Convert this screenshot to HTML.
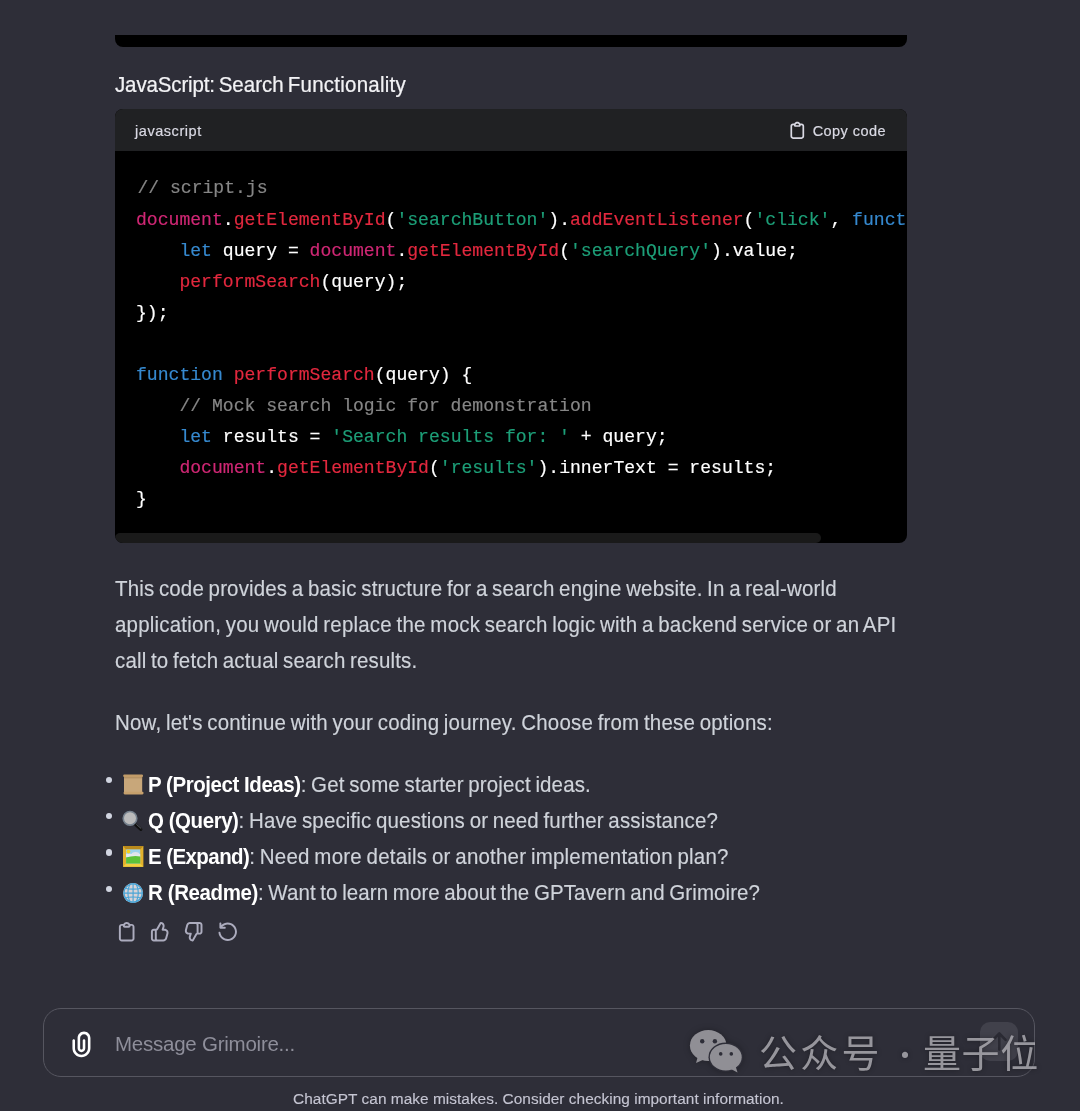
<!DOCTYPE html>
<html lang="en">
<head>
<meta charset="utf-8">
<title>Grimoire</title>
<style>
*{box-sizing:border-box;margin:0;padding:0}
html,body{width:1080px;height:1111px;overflow:hidden;background:#2e2e38}
body{position:relative;will-change:transform;font-family:"Liberation Sans",sans-serif;color:#d1d5db}
.abs{position:absolute;white-space:nowrap}
svg{position:absolute;display:block;overflow:visible}
.prev{left:115px;top:35px;width:792px;height:12px;background:#000;border-radius:0 0 8px 8px}
.h{left:115px;top:71px;font-size:20.5px;line-height:28px;color:#f2f2f5;-webkit-text-stroke:.22px #f2f2f5;transform:scaleY(1.06);transform-origin:0 21.1px}
.cb{left:115px;top:109px;width:792px;height:434px;background:#000;border-radius:8px;overflow:hidden}
.cbh{left:0;top:0;width:792px;height:42px;background:#202123}
.lang{left:20px;top:13px;font-size:14.5px;line-height:18px;color:#d9d9e3;letter-spacing:.55px;-webkit-text-stroke:.2px}
.copy{right:21px;top:13px;font-size:14.5px;line-height:18px;color:#d9d9e3;letter-spacing:.45px;-webkit-text-stroke:.2px}
.cl{left:21px;font-family:"Liberation Mono",monospace;font-size:18.08px;line-height:31px;color:#fff;white-space:pre;-webkit-text-stroke:.18px}
.c{color:#868686}.m{color:#cf2774}.r{color:#e2283e}.g{color:#1d9f78}.b{color:#3689cf}
.sb{left:0;top:424px;width:706px;height:10px;background:#1a1a1a;border-radius:5px}
.p{left:115px;font-size:20.5px;line-height:36px;color:#cfd3da;-webkit-text-stroke:.16px;word-spacing:-1.2px;transform:scaleY(1.045);transform-origin:0 25.1px}
.p b{color:#fff;font-weight:700;letter-spacing:-.45px;-webkit-text-stroke:0;word-spacing:0}
.dot{width:6.4px;height:6.4px;border-radius:50%;background:#d1d5e0}
.inp{left:43px;top:1008px;width:992px;height:69px;border:1px solid #565660;border-radius:18px;background:#2e2e38}
.ph{left:115px;top:1030px;font-size:20.5px;line-height:28px;color:#8e8e9a;letter-spacing:-.24px}
.foot{left:0;top:1090px;width:1077px;text-align:center;font-size:15.4px;line-height:18px;color:#c5c5d2;letter-spacing:.04px;-webkit-text-stroke:.12px}
.send{left:979.5px;top:1022px;width:38.5px;height:38.5px;border-radius:10px;background:#41414b}
.wm{font-family:"Liberation Sans","Noto Sans CJK SC",sans-serif;font-size:38px;line-height:54px;color:rgba(176,175,180,.82);text-shadow:0 0 5px rgba(0,0,0,.35)}
</style>
</head>
<body>
<div class="abs prev"></div>
<div class="abs h" style="letter-spacing:-.136px">JavaScript:</div><div class="abs h" style="left:218.7px">Search</div><div class="abs h" style="left:287.8px;letter-spacing:.23px">Functionality</div>

<div class="abs cb">
  <div class="abs cbh">
    <div class="abs lang">javascript</div>
    <svg style="left:671.75px;top:10.5px" width="20.6" height="20.6" viewBox="0 0 24 24" fill="#d9d9e3"><path fill-rule="evenodd" clip-rule="evenodd" d="M12 4C10.8954 4 10 4.89543 10 6H14C14 4.89543 13.1046 4 12 4ZM8.53513 4C9.22675 2.8044 10.5194 2 12 2C13.4806 2 14.7733 2.8044 15.4649 4H17C18.6569 4 20 5.34315 20 7V19C20 20.6569 18.6569 22 17 22H7C5.34315 22 4 20.6569 4 19V7C4 5.34315 5.34315 4 7 4H8.53513ZM8 6H7C6.44772 6 6 6.44772 6 7V19C6 19.5523 6.44772 20 7 20H17C17.5523 20 18 19.5523 18 19V7C18 6.44772 17.5523 6 17 6H16C16 7.10457 15.1046 8 14 8H10C8.89543 8 8 7.10457 8 6Z"/></svg>
    <div class="abs copy">Copy code</div>
  </div>
  <div class="abs cl" style="top:65px;transform:translate(1.4px,-.7px)"><span class="c">// script.js</span></div>
  <div class="abs cl" style="top:96px"><span class="m">document</span>.<span class="r">getElementById</span>(<span class="g">'searchButton'</span>).<span class="r">addEventListener</span>(<span class="g">'click'</span>, <span class="b">function</span>() {</div>
  <div class="abs cl" style="top:127px">    <span class="b">let</span> query = <span class="m">document</span>.<span class="r">getElementById</span>(<span class="g">'searchQuery'</span>).value;</div>
  <div class="abs cl" style="top:158px">    <span class="r">performSearch</span>(query);</div>
  <div class="abs cl" style="top:189px">});</div>
  <div class="abs cl" style="top:251px"><span class="b">function</span> <span class="r">performSearch</span>(query) {</div>
  <div class="abs cl" style="top:282px">    <span class="c">// Mock search logic for demonstration</span></div>
  <div class="abs cl" style="top:313px">    <span class="b">let</span> results = <span class="g">'Search results for: '</span> + query;</div>
  <div class="abs cl" style="top:344px">    <span class="m">document</span>.<span class="r">getElementById</span>(<span class="g">'results'</span>).innerText = results;</div>
  <div class="abs cl" style="top:375px">}</div>
  <div class="abs sb"></div>
</div>

<div class="abs p" id="p1" style="top:571px;letter-spacing:.142px">This code provides a basic structure for a search engine website. In a real-world</div>
<div class="abs p" id="p2" style="top:607px;letter-spacing:.195px">application, you would replace the mock search logic with a backend service or an API</div>
<div class="abs p" id="p3" style="top:643px;letter-spacing:.145px">call to fetch actual search results.</div>
<div class="abs p" id="p4" style="top:705px;letter-spacing:.169px">Now, let's continue with your coding journey. Choose from these options:</div>

<div class="abs dot" style="left:105.6px;top:777px"></div>
<div class="abs dot" style="left:105.6px;top:813.1px"></div>
<div class="abs dot" style="left:105.6px;top:849.3px"></div>
<div class="abs dot" style="left:105.6px;top:885.5px"></div>

<!-- emoji: scroll -->
<svg style="left:123px;top:773.5px" width="20.5" height="21" viewBox="0 0 20.5 21">
  <rect x="1" y="1.5" width="18.2" height="18" fill="#c8a77a"/>
  <rect x="1" y="3" width="18.2" height="1.4" fill="#a58354" opacity=".55"/>
  <rect x="0.2" y="0.4" width="19.8" height="2.7" rx="1.1" fill="#c29c69"/>
  <rect x="0.6" y="17.7" width="19.9" height="2.7" rx="1.1" fill="#c6a06c"/>
</svg>
<!-- emoji: magnifier -->
<svg style="left:122.3px;top:809.6px" width="21" height="21" viewBox="0 0 21 21">
  <line x1="13.6" y1="14.6" x2="18.8" y2="19.4" stroke="#101010" stroke-width="3.2" stroke-linecap="round"/>
  <line x1="14.6" y1="14.4" x2="19" y2="18.4" stroke="#6a7077" stroke-width=".8" stroke-linecap="round"/>
  <circle cx="8" cy="8.3" r="6.8" fill="#bbbbbb" stroke="#76828e" stroke-width="1.6"/>
</svg>
<!-- emoji: framed picture -->
<svg style="left:123px;top:846px" width="20.4" height="20.8" viewBox="0 0 20.4 20.8">
  <rect x="0" y="0" width="20.4" height="20.8" fill="#e3b22c"/>
  <polygon points="0,0 20.4,0 17.2,3.4 3.1,3.4" fill="#b98a1c"/>
  <polygon points="0,20.8 20.4,20.8 17.2,17.5 3.1,17.5" fill="#f3cf3e"/>
  <rect x="3.1" y="3.4" width="14.1" height="14.1" fill="#9bd3ee"/>
  <rect x="3.1" y="7.8" width="14.1" height="3.4" fill="#e4e8ee"/>
  <circle cx="5.4" cy="5.6" r="1.9" fill="#f4d11f"/>
  <ellipse cx="12.5" cy="7.6" rx="3.6" ry="1.6" fill="#dfe4ec"/>
  <path d="M3.1 11.6 Q10 9.2 17.2 10.4 V17.5 H3.1Z" fill="#5dc23a"/>
</svg>
<!-- emoji: globe -->
<svg style="left:123px;top:882.6px" width="20.2" height="20.2" viewBox="0 0 20.2 20.2">
  <defs><clipPath id="gc"><circle cx="10.1" cy="10.1" r="10"/></clipPath></defs>
  <circle cx="10.1" cy="10.1" r="10" fill="#d9d3d6"/>
  <g fill="none" stroke="#4aa5d6" stroke-width="1.15" clip-path="url(#gc)">
    <line x1="10.1" y1="0" x2="10.1" y2="20.2"/>
    <line x1="0" y1="10.1" x2="20.2" y2="10.1"/>
    <ellipse cx="10.1" cy="10.1" rx="5.2" ry="10.6"/>
    <path d="M1 5 Q10.1 7.4 19.2 5"/>
    <path d="M1 15.2 Q10.1 12.8 19.2 15.2"/>
    <circle cx="10.1" cy="10.1" r="9.3" stroke-width="1.6"/>
  </g>
</svg>

<div class="abs p" id="l1" style="left:148px;top:767px"><b>P (Project Ideas)</b><span style="letter-spacing:.14px">: Get some starter project ideas.</span></div>
<div class="abs p" id="l2" style="left:148px;top:803px"><b>Q (Query)</b><span style="letter-spacing:.134px">: Have specific questions or need further assistance?</span></div>
<div class="abs p" id="l3" style="left:148px;top:839px"><b style="letter-spacing:-.58px">E (Expand)</b><span style="letter-spacing:.202px">: Need more details or another implementation plan?</span></div>
<div class="abs p" id="l4" style="left:148px;top:875px"><b style="letter-spacing:-.39px">R (Readme)</b><span style="letter-spacing:.08px">: Want to learn more about the GPTavern and Grimoire?</span></div>

<!-- action icons -->
<svg style="left:114.9px;top:920.25px" width="23.4" height="23.4" viewBox="0 0 24 24" fill="#acacbe"><path fill-rule="evenodd" clip-rule="evenodd" d="M12 4C10.8954 4 10 4.89543 10 6H14C14 4.89543 13.1046 4 12 4ZM8.53513 4C9.22675 2.8044 10.5194 2 12 2C13.4806 2 14.7733 2.8044 15.4649 4H17C18.6569 4 20 5.34315 20 7V19C20 20.6569 18.6569 22 17 22H7C5.34315 22 4 20.6569 4 19V7C4 5.34315 5.34315 4 7 4H8.53513ZM8 6H7C6.44772 6 6 6.44772 6 7V19C6 19.5523 6.44772 20 7 20H17C17.5523 20 18 19.5523 18 19V7C18 6.44772 17.5523 6 17 6H16C16 7.10457 15.1046 8 14 8H10C8.89543 8 8 7.10457 8 6Z"/></svg>
<svg style="left:148.2px;top:920.25px" width="23.4" height="23.4" viewBox="0 0 24 24" fill="#acacbe"><path fill-rule="evenodd" clip-rule="evenodd" d="M12.1318 2.50389C12.3321 2.15338 12.7235 1.95768 13.124 2.00775L13.5778 2.06447C16.0449 2.37286 17.636 4.83353 16.9048 7.20993L16.354 8.99999H17.0722C19.7097 8.99999 21.6253 11.5079 20.9313 14.0525L19.5677 19.0525C19.0931 20.7927 17.5124 22 15.7086 22H6C4.34315 22 3 20.6568 3 19V12C3 10.3431 4.34315 8.99999 6 8.99999H8C8.25952 8.99999 8.49914 8.86094 8.6279 8.63561L12.1318 2.50389ZM10 20H15.7086C16.6105 20 17.4008 19.3964 17.6381 18.5262L19.0018 13.5262C19.3488 12.254 18.391 11 17.0722 11H15C14.6827 11 14.3841 10.8494 14.1956 10.5941C14.0071 10.3388 13.9509 10.0092 14.0442 9.70591L14.9932 6.62175C15.3384 5.49984 14.6484 4.34036 13.5319 4.08468L10.3644 9.62789C10.0522 10.1742 9.56691 10.5859 9 10.8098V19C9 19.5523 9.44772 20 10 20ZM7 11V19C7 19.3506 7.06015 19.6872 7.17071 20H6C5.44772 20 5 19.5523 5 19V12C5 11.4477 5.44772 11 6 11H7Z"/></svg>
<svg style="left:182.2px;top:920.25px" width="23.4" height="23.4" viewBox="0 0 24 24" fill="#acacbe"><path fill-rule="evenodd" clip-rule="evenodd" d="M11.8727 21.4961C11.6725 21.8466 11.2811 22.0423 10.8805 21.9922L10.4267 21.9355C7.95958 21.6271 6.36855 19.1665 7.09975 16.7901L7.65054 15H6.93226C4.29476 15 2.37923 12.4921 3.0732 9.94753L4.43684 4.94753C4.91145 3.20728 6.49209 2 8.29589 2H18.0045C19.6614 2 21.0045 3.34315 21.0045 5V12C21.0045 13.6569 19.6614 15 18.0045 15H16.0045C15.745 15 15.5054 15.1391 15.3766 15.3644L11.8727 21.4961ZM14.0045 4H8.29589C7.39399 4 6.60367 4.60364 6.36637 5.47376L5.00273 10.4738C4.65574 11.746 5.61351 13 6.93226 13H9.00451C9.32185 13 9.62036 13.1506 9.8089 13.4059C9.99743 13.6612 10.0536 13.9908 9.96028 14.2941L9.01131 17.3782C8.6661 18.5002 9.35608 19.6596 10.4726 19.9153L13.6401 14.3721C13.9523 13.8258 14.4376 13.4141 15.0045 13.1902V5C15.0045 4.44772 14.5568 4 14.0045 4ZM17.0045 13V5C17.0045 4.64937 16.9444 4.31278 16.8338 4H18.0045C18.5568 4 19.0045 4.44772 19.0045 5V12C19.0045 12.5523 18.5568 13 18.0045 13H17.0045Z"/></svg>
<svg style="left:215.8px;top:920.25px" width="23.4" height="23.4" viewBox="0 0 24 24" fill="#acacbe"><path d="M4.5 2.5C5.05228 2.5 5.5 2.94772 5.5 3.5V5.07196C7.19872 3.47759 9.48483 2.5 12 2.5C17.2467 2.5 21.5 6.75329 21.5 12C21.5 17.2467 17.2467 21.5 12 21.5C7.1307 21.5 3.11828 17.8375 2.565 13.1164C2.50071 12.5679 2.89327 12.0711 3.4418 12.0068C3.99033 11.9425 4.48712 12.3351 4.5514 12.8836C4.98798 16.6089 8.15708 19.5 12 19.5C16.1421 19.5 19.5 16.1421 19.5 12C19.5 7.85786 16.1421 4.5 12 4.5C9.7796 4.5 7.7836 5.46469 6.40954 7H9C9.55228 7 10 7.44772 10 8C10 8.55228 9.55228 9 9 9H4.5C3.96064 9 3.52101 8.57299 3.50073 8.03859C3.49983 8.01771 3.49958 7.99677 3.5 7.9758V3.5C3.5 2.94772 3.94772 2.5 4.5 2.5Z"/></svg>

<div class="abs inp"></div>
<svg style="left:65.5px;top:1029px" width="30.9" height="30.9" viewBox="0 0 24 24"><path fill-rule="evenodd" clip-rule="evenodd" d="M9 7C9 4.23858 11.2386 2 14 2C16.7614 2 19 4.23858 19 7V15C19 18.866 15.866 22 12 22C8.13401 22 5 18.866 5 15V9C5 8.44772 5.44772 8 6 8C6.55228 8 7 8.44772 7 9V15C7 17.7614 9.23858 20 12 20C14.7614 20 17 17.7614 17 15V7C17 5.34315 15.6569 4 14 4C12.3431 4 11 5.34315 11 7V15C11 15.5523 11.4477 16 12 16C12.5523 16 13 15.5523 13 15V9C13 8.44772 13.4477 8 14 8C14.5523 8 15 8.44772 15 9V15C15 16.6569 13.6569 18 12 18C10.3431 18 9 16.6569 9 15V7Z" fill="#fff"/></svg>
<div class="abs ph">Message Grimoire...</div>
<div class="abs send"></div>
<svg style="left:979.5px;top:1022px" width="38.5" height="38.5" viewBox="0 0 38.5 38.5" fill="none" stroke="#2a2a33" stroke-width="2.6" stroke-linecap="round" stroke-linejoin="round"><path d="M19.3 27.5V11.5M13 17.8L19.3 11.5L25.6 17.8"/></svg>

<!-- watermark -->
<svg style="left:688px;top:1028px;filter:drop-shadow(0 0 3px rgba(0,0,0,.3))" width="56" height="46" viewBox="688 1028 56 46">
  <g fill="#908f95">
    <ellipse cx="708.2" cy="1045.5" rx="18.3" ry="15.5"/>
    <path d="M698 1056 L696 1063 L705 1059Z"/>
  </g>
  <ellipse cx="725.8" cy="1057.2" rx="17.3" ry="14.7" fill="#2e2e38"/>
  <g fill="#908f95">
    <ellipse cx="725.8" cy="1057.2" rx="15.9" ry="13.3"/>
    <path d="M729 1068 L737.5 1072.5 L735.5 1066Z"/>
  </g>
  <g fill="#2e2e38">
    <circle cx="702.2" cy="1041.2" r="2.2"/><circle cx="714.9" cy="1041.2" r="2.2"/>
    <circle cx="720.7" cy="1053.9" r="1.8"/><circle cx="731.3" cy="1053.9" r="1.8"/>
  </g>
</svg>
<div class="abs wm" id="wm1" style="left:759px;top:1027px;letter-spacing:3.2px">公众号</div>
<div class="abs wm" id="wm2" style="left:890.5px;top:1026px;font-family:'Noto Sans CJK SC',sans-serif;font-size:29px">·</div>
<div class="abs wm" id="wm3" style="left:923px;top:1027px;letter-spacing:.6px">量子位</div>

<div class="abs foot">ChatGPT can make mistakes. Consider checking important information.</div>
</body>
</html>
